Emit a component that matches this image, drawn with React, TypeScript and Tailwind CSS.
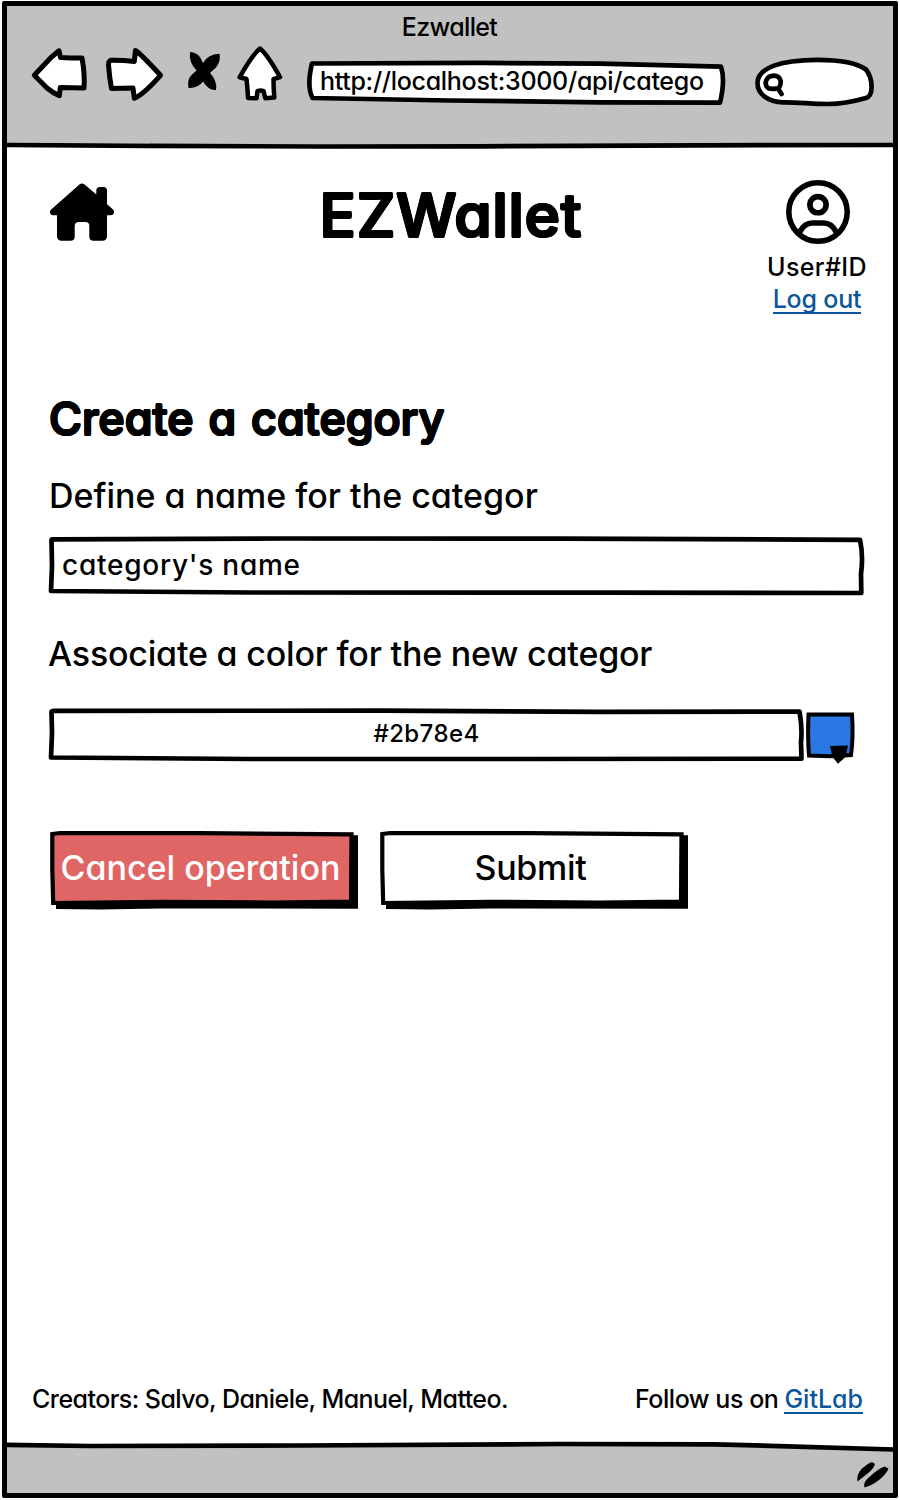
import type { ReactNode } from "react";

function BackIcon() {
  return (
    <svg viewBox="30 45 60 60" className="h-[60px] w-[60px] shrink-0" fill="#fff" stroke="#000" strokeWidth="5" strokeLinejoin="round">
      <path d="M59 50.7 L51 57.5 L34.3 75.3 L47 88 Q53 93 59.3 95.7 L60.3 87.4 L84 88 Q85 74 82 58 Q71 58 60.5 57.5 Z" />
    </svg>
  );
}

function ForwardIcon() {
  return (
    <svg viewBox="104 45 62 60" className="ml-[14px] h-[60px] w-[62px] shrink-0" fill="#fff" stroke="#000" strokeWidth="5" strokeLinejoin="round">
      <path d="M135.4 50.5 Q140 53 160.5 75.3 Q144 94 134.3 98.3 L133 88 L111.5 88.5 Q109.5 78 108.5 65 Q108.5 61 110.5 60.3 Q122 60 134.3 61.5 Z" />
    </svg>
  );
}

function StopIcon() {
  return (
    <svg viewBox="184 45 40 60" className="ml-[18px] h-[60px] w-[40px] shrink-0">
      <path d="M190 52 Q199 52 203 63 Q208 54 219.5 53.7 Q221 61 216 67.5 L210 73 Q217.500 81 216 90 Q209 91 203 81.500 Q198 88.500 188.5 88 Q187 79.500 191.500 75 L196.500 70.5 Q188.500 62 190 52 Z" />
    </svg>
  );
}

function HomeOutlineIcon() {
  return (
    <svg viewBox="236 45 50 60" className="ml-[12px] h-[60px] w-[50px] shrink-0" fill="#fff" stroke="#000" strokeWidth="4.5" strokeLinejoin="round">
      <path d="M260 48.5 Q267 54 280 77 L273.5 79.2 Q273.5 87 274.3 97.5 L265.3 98.2 L263.5 91 Q260.5 89.8 257.5 91 L256.5 98.2 L248 98 Q247.5 87 246.5 79 L239.7 77.2 Q252 55 260 48.5 Z" />
    </svg>
  );
}

function HouseIcon() {
  return (
    <svg viewBox="50 180 64 64" className="h-16 w-16">
      <path d="M79.7 184.3 Q82 182.5 84.3 184.3 L96.3 194.5 V190.5 Q96.3 187 99.8 187 H103.5 Q107 187 107 190.5 V204.3 L112.8 209.3 Q114.5 211 114 213 Q113.3 215.3 110.8 215.3 H107 V236 Q107 240.7 102.3 240.7 H93.5 Q89.3 240.7 89.3 236.5 V226 Q89.3 222 85.3 222 H78.7 Q74.7 222 74.7 226 V236.5 Q74.7 240.7 70.5 240.7 H61.7 Q57 240.7 57 236 V215.3 H53 Q50.7 215.3 50 213 Q49.6 211 51.2 209.5 Z" />
    </svg>
  );
}

function AvatarIcon() {
  return (
    <svg viewBox="783 178 68 68" className="h-[68px] w-[68px]" fill="none" stroke="#000" strokeWidth="5.6">
      <circle cx="818" cy="212" r="29.2" />
      <circle cx="818" cy="204.7" r="8.1" />
      <path d="M799.5 232.5 Q804 223 812.5 223 H823.5 Q832 223 836.5 232.5" />
    </svg>
  );
}

function Outline({ viewBox, children }: { viewBox: string; children: ReactNode }) {
  return (
    <svg viewBox={viewBox} className="absolute inset-0 h-full w-full overflow-visible" fill="#fff" stroke="#000" strokeWidth="4.7" strokeLinejoin="round">
      {children}
    </svg>
  );
}

function SketchButton({ label, fill, className }: { label: string; fill: string; className: string }) {
  return (
    <button type="button" className="relative flex h-20 w-[312px] shrink-0 items-center justify-center pr-[7px] pb-[4px]">
      <Outline viewBox="48 830 312 80">
        <path d="M352 835.3 H358 V908.7 L160 908.5 L100 909.5 L56 909 V900 Z" fill="#000" stroke="none" />
        <path d="M52.3 834 L60 833 L200 833.2 L351.5 834.3 L351 901.5 L270 902.5 L160 901.8 L53.2 903 L52.3 870 Z" fill={fill} strokeWidth="4.2" strokeLinejoin="miter" />
      </Outline>
      <span className={className}>{label}</span>
    </button>
  );
}

export default function App() {
  return (
    <div className="h-[1500px] w-[900px] overflow-hidden bg-white pt-px pr-[2px] pb-[2px] pl-[2px] font-['Inter','Liberation_Sans',sans-serif] text-[25px] leading-8 font-medium whitespace-nowrap text-black [font-feature-settings:'cv11']">
      <div className="flex h-full flex-col rounded-[2px] border-[5px] border-black">
        <header className="h-[137px] shrink-0 bg-[#c1c1c1] pt-[5px]">
          <div className="pr-px text-center tracking-[-0.65px]">Ezwallet</div>
          <div className="mt-[2px] flex h-[60px] pl-[23px]">
            <BackIcon />
            <ForwardIcon />
            <StopIcon />
            <HomeOutlineIcon />
            <div className="relative ml-[19px] h-[60px] w-[422px] shrink-0 pt-[20px] pl-[15px]">
              <Outline viewBox="305 45 422 60">
                <path d="M312 63.5 L480 62.9 L600 63.7 L721 66.7 Q725.5 80 720 102.7 L600 102.3 L450 100.5 L312.5 98 Q306.5 86 312 63.5 Z" />
              </Outline>
              <span className="relative tracking-[-0.3px]">http://localhost:3000/api/catego</span>
            </div>
            <div className="relative ml-[26px] h-[60px] w-[124px] shrink-0">
              <Outline viewBox="753 45 124 60">
                <path d="M783 102.3 C768 102 757.5 94 757.5 83 C757.5 68 780 60 817 59.8 C840 59.8 858 63.5 866 69.5 C871 76 871.8 82 871.5 88 C871.3 94 870 97 866 98 C852 102 842 104 828 104 C812 104 798 102 783 102.3 Z" />
                <path d="M778.5 88.5 C782.5 83 781 76 774 75.7 C766 75.7 763.5 84 768 88 C771.5 89.5 775 88.7 778 88.5 L781.5 94" fill="none" strokeLinecap="round" />
              </Outline>
            </div>
          </div>
        </header>

        <svg viewBox="7 143 886 5" className="h-[5px] w-[886px] shrink-0 overflow-visible" fill="none" stroke="#000" strokeWidth="4.7">
          <path d="M150 142 H700 V144.5 H150 Z" fill="#c1c1c1" stroke="none" />
          <path d="M6 145 L150 145.8 L320 146.5 L480 146.3 L700 145.3 L894 145" />
        </svg>

        <main className="flex flex-1 flex-col">
          <section className="grid h-[243px] grid-cols-[64px_1fr_104px] items-start pr-[24px] pl-[43px]">
            <div className="pt-8">
              <HouseIcon />
            </div>
            <h1 className="pt-[31px] pl-[23px] text-center text-[60px] leading-[72px] font-medium tracking-[1px] [text-shadow:1.4px_0_#000,-1.4px_0_#000,0_1.4px_#000,0_-1.4px_#000,1px_1px_#000,-1px_1px_#000,1px_-1px_#000,-1px_-1px_#000]">
              EZWallet
            </h1>
            <div className="flex flex-col items-center pt-[30px]">
              <AvatarIcon />
              <span className="mt-[5px] tracking-[0.4px]">User#ID</span>
              <a href="#" className="mt-[4px] border-b-2 border-[#0b5598] leading-[25px] tracking-[-0.2px] text-[#0b5598]">Log out</a>
            </div>
          </section>

          <section className="pl-[41px]">
            <h2 className="pl-px text-[45px] leading-[56px] font-medium tracking-[-0.1px] [word-spacing:3px] [text-shadow:1px_0_#000,-1px_0_#000,0_1px_#000,0_-1px_#000,0.7px_0.7px_#000,-0.7px_0.7px_#000,0.7px_-0.7px_#000,-0.7px_-0.7px_#000]">
              Create a category
            </h2>
            <p className="mt-[29px] ml-px text-[34px] leading-10 [font-weight:470]">Define a name for the categor</p>
            <div className="relative mt-[20px] flex h-[60px] w-[816px] items-center pb-[2px] pl-[14px] text-[28px] tracking-[0.75px]">
              <Outline viewBox="48 536 816 60">
                <path d="M51.5 540 Q51.5 539.2 56 539.3 L280 538.5 L560 538.7 L860 539.8 Q863.5 556 861 574 L861.3 593 L600 592.7 L250 592.5 L51 591 L52 566 Z" />
              </Outline>
              <span className="relative">category's name</span>
            </div>
            <p className="mt-[38px] text-[34px] leading-10 tracking-[-0.2px] [font-weight:470]">Associate a color for the new categor</p>
            <div className="mt-[33px] flex">
              <div className="relative flex h-14 w-[757px] shrink-0 items-center justify-center pb-[2px] text-[24px] tracking-[0.4px]">
                <Outline viewBox="48 707 757 56">
                  <path d="M51.5 711.5 L54 710.8 L380 710.7 L600 711.8 L799.5 711.7 Q802.5 728 801 742 L801.5 758.7 L500 759 L250 759 L51 757.5 L52 733 Z" />
                </Outline>
                <span className="relative">#2b78e4</span>
              </div>
              <svg viewBox="805 707 53 58" className="h-[58px] w-[53px] shrink-0">
                <path d="M808.5 714.5 L852 714.5 Q853.5 737 851 755 L830 756.3 L809 755.5 Q807.5 737 808.5 714.5 Z" fill="#2b78e4" stroke="#000" strokeWidth="4" />
                <path d="M830 746 L848 745.5 L845.5 757 L838 763.8 L832.5 757 Z" />
              </svg>
            </div>
            <div className="mt-[65px] flex gap-[18px]">
              <SketchButton label="Cancel operation" fill="#e06666" className="relative text-[34px] leading-10 text-white [font-weight:470]" />
              <SketchButton label="Submit" fill="#fff" className="relative text-[34px] leading-10 tracking-[-0.3px] [font-weight:470]" />
            </div>
          </section>

          <footer className="mt-auto mb-[30px] flex items-baseline pr-[30px] pl-[25px]">
            <span className="tracking-[-0.56px]">Creators: Salvo, Daniele, Manuel, Matteo.</span>
            <span className="ml-auto tracking-[-0.45px]">Follow us on</span>
            <a href="#" className="ml-[6px] border-b-2 border-[#0b5598] leading-[25px] text-[#0b5598]">GitLab</a>
          </footer>
        </main>

        <svg viewBox="7 1445 886 48" className="h-[48px] w-[886px] shrink-0 overflow-visible">
          <path d="M7 1445 H893 V1493 H7 Z" fill="#c1c1c1" />
          <path d="M700 1443 L893 1448.5 V1443 Z" fill="#fff" />
          <path d="M6 1444.8 L90 1446 L300 1445.5 L560 1444 L715 1444.3 L894 1449.5" fill="none" stroke="#000" strokeWidth="4.7" />
          <path d="M857.5 1481.5 Q856 1475 862 1468.5 Q867 1463.5 872 1462 L875 1464 Q873.500 1469 867 1474 Z" />
          <path d="M864.5 1487.5 Q862.5 1482 871 1475.500 Q878 1469 884.5 1466.5 L888.5 1468.5 Q886.5 1474 879 1480 Q872 1485.500 864.5 1487.5 Z" />
        </svg>
      </div>
    </div>
  );
}
